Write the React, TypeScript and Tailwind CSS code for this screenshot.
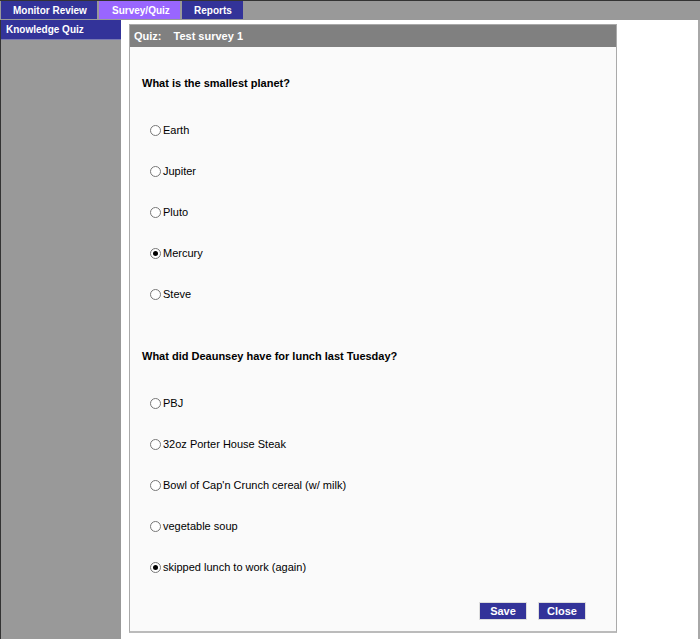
import { ReactNode } from 'react';

type Opt = { label: string; checked?: boolean };

const questions: { text: string; options: Opt[] }[] = [
  {
    text: 'What is the smallest planet?',
    options: [
      { label: 'Earth' },
      { label: 'Jupiter' },
      { label: 'Pluto' },
      { label: 'Mercury', checked: true },
      { label: 'Steve' },
    ],
  },
  {
    text: 'What did Deaunsey have for lunch last Tuesday?',
    options: [
      { label: 'PBJ' },
      { label: '32oz Porter House Steak' },
      { label: "Bowl of Cap'n Crunch cereal (w/ milk)" },
      { label: 'vegetable soup' },
      { label: 'skipped lunch to work (again)', checked: true },
    ],
  },
];

function Tab({ children, active }: { children: ReactNode; active?: boolean }) {
  return (
    <div
      className={
        'flex h-[18px] items-center text-[10px] font-bold text-white ' +
        (active ? 'bg-[#9966ff]' : 'bg-[#333399]')
      }
    >
      {children}
    </div>
  );
}

function Radio({ checked }: { checked?: boolean }) {
  return (
    <span className="mr-[2px] flex h-[11px] w-[11px] shrink-0 items-center justify-center rounded-full border border-[#777] bg-white">
      {checked && <span className="h-[5px] w-[5px] rounded-full bg-black" />}
    </span>
  );
}

export default function App() {
  return (
    <div className="flex h-screen flex-col overflow-hidden bg-white font-['Liberation_Sans',Arial,sans-serif] text-black">
      <div className="flex h-[20px] shrink-0 items-start gap-[2px] border-t border-[#333] bg-[#999] pl-[1px]">
        <Tab>
          <span className="w-[96px] pl-[12px]">Monitor Review</span>
        </Tab>
        <Tab active>
          <span className="w-[81px] pl-[13px]">Survey/Quiz</span>
        </Tab>
        <Tab>
          <span className="w-[61px] pl-[12px]">Reports</span>
        </Tab>
      </div>

      <div className="flex min-h-0 flex-1">
        <aside className="w-[121px] shrink-0 border-l border-[#333] bg-[#999]">
          <div className="flex h-[20px] items-center border-b border-[#7a7ab0] bg-[#333399] pl-[5px] text-[10px] font-bold text-white">
            Knowledge Quiz
          </div>
        </aside>

        <main className="flex-1 border-r-2 border-[#a8a8a8] pl-[8px] pt-[4px]">
          <div className="w-[488px] border border-[#aaa] border-b-2 border-b-[#bbb] bg-[#fafafa]">
            <div className="flex h-[22px] items-center bg-[#808080] pl-[4px] text-[11px] font-bold text-white">
              <span>Quiz:</span>
              <span className="ml-[12px]">Test survey 1</span>
            </div>

            <div className="pb-[11px] pl-[12px] pr-[30px]">
              {questions.map((q, qi) => (
                <div key={qi} className={qi === 0 ? 'pt-[29px]' : 'pt-[34px]'}>
                  <p className="text-[11px] font-bold leading-[14px]">{q.text}</p>
                  <div className="mt-[20px] pl-[8px]">
                    {q.options.map((o) => (
                      <label key={o.label} className="flex h-[41px] items-center text-[11px]">
                        <Radio checked={o.checked} />
                        <span>{o.label}</span>
                      </label>
                    ))}
                  </div>
                </div>
              ))}

              <div className="mt-[14px] flex justify-end gap-[11px]">
                <button className="h-[18px] w-[48px] border border-[#ddd] bg-[#333399] text-[11px] font-bold text-white">
                  Save
                </button>
                <button className="h-[18px] w-[48px] border border-[#ddd] bg-[#333399] text-[11px] font-bold text-white">
                  Close
                </button>
              </div>
            </div>
          </div>
        </main>
      </div>
    </div>
  );
}
